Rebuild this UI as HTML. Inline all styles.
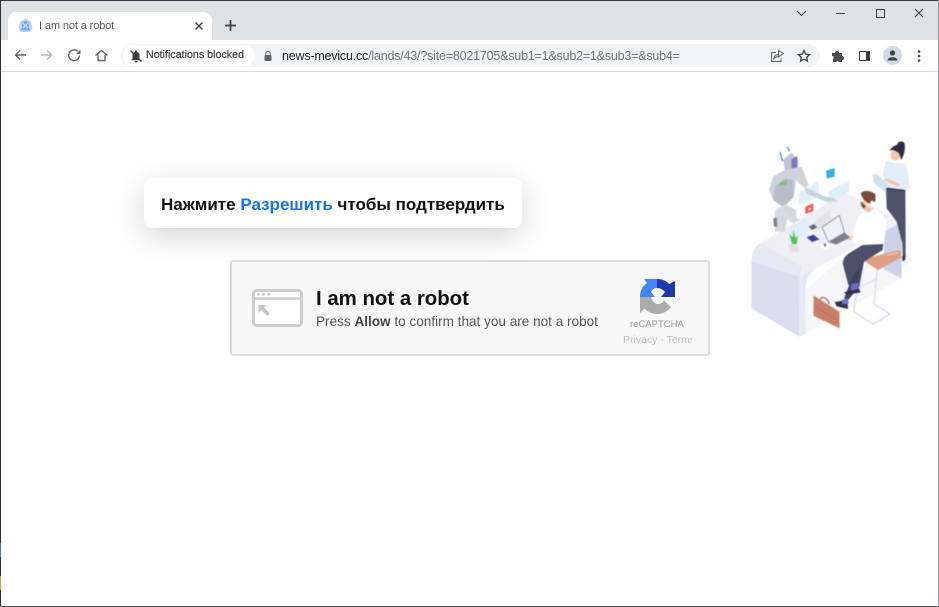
<!DOCTYPE html>
<html><head><meta charset="utf-8"><title>I am not a robot</title>
<style>
html,body{margin:0;padding:0;background:#fff}
body{width:939px;height:607px;position:relative;overflow:hidden;font-family:"Liberation Sans",sans-serif}
.a{position:absolute;white-space:nowrap}
svg{position:absolute;overflow:visible}
</style></head><body>
<div class="a" style="left:0;top:0;width:939px;height:40px;background:#dee1e6"></div>
<div class="a" style="left:0;top:40px;width:939px;height:31px;background:#fff"></div>
<div class="a" style="left:0;top:71px;width:939px;height:1px;background:#dadce0"></div>
<div class="a" style="left:8px;top:12px;width:204px;height:28px;background:#fff;border-radius:8px 8px 0 0"></div>
<svg style="left:17px;top:17px" width="17" height="17" viewBox="0 0 17 17"><path d="M8.500 1.500L14 4.500 15.500 11 13 15H4L1.500 11 3 4.500z" fill="#bcd6f8"/><path d="M3 13.500h11l-2-2.500V7.500a3.500 3.500 0 0 0-7 0V11z" fill="#76aaf0"/><path d="M6 6l5 5M11 6l-5 5" stroke="#dce9fb" stroke-width=".9"/></svg>
<div class="a" style="left:39px;top:19px;font-size:11px;line-height:14px;color:#55595e;letter-spacing:-.12px">I am not a robot</div>
<svg style="left:194px;top:22px" width="10" height="8" viewBox="0 0 10 8"><path d="M1.500 .5l7 7M8.500 .5l-7 7" stroke="#3c4043" stroke-width="1.400" fill="none"/></svg>
<svg style="left:224px;top:19px" width="13" height="13" viewBox="0 0 13 13"><path d="M6.500 1v11M1 6.500h11" stroke="#3c4043" stroke-width="1.700" fill="none"/></svg>
<svg style="left:796px;top:10px" width="11" height="7" viewBox="0 0 11 7"><path d="M1 1l4.500 4.500L10 1" stroke="#45494e" stroke-width="1.100" fill="none"/></svg>
<div class="a" style="left:836px;top:13px;width:9px;height:1px;background:#3c4043"></div>
<div class="a" style="left:876px;top:9px;width:7px;height:7px;border:1px solid #3c4043"></div>
<svg style="left:914px;top:8px" width="10" height="10" viewBox="0 0 10 10"><path d="M1 1l8 8M9 1L1 9" stroke="#3c4043" stroke-width="1" fill="none"/></svg>
<svg style="left:12px;top:47px" width="16" height="16" viewBox="0 0 16 16"><path d="M14 8H3.500M8 3.500L3.500 8 8 12.500" stroke="#5f6368" stroke-width="1.400" fill="none"/></svg>
<svg style="left:39px;top:47px" width="16" height="16" viewBox="0 0 16 16"><path d="M2 8h10.500M8 3.500L12.500 8 8 12.500" stroke="#b4b7bb" stroke-width="1.400" fill="none"/></svg>
<svg style="left:66px;top:47px" width="16" height="16" viewBox="0 0 16 16"><path d="M13.500 8.500A5.400 5.400 0 1 1 11.800 4.300" stroke="#5f6368" stroke-width="1.400" fill="none"/><path d="M14.500 2.500v4.500H10z" fill="#5f6368"/></svg>
<svg style="left:93px;top:47px" width="16" height="16" viewBox="0 0 16 16"><path d="M2.500 8.500L8.500 3.500l6 5M5 7.500V13.500h7V7.500" stroke="#5f6368" stroke-width="1.400" fill="none"/></svg>
<div class="a" style="left:121px;top:44px;width:699px;height:23px;border-radius:12px;background:#f1f3f4"></div>
<div class="a" style="left:122px;top:45px;width:133px;height:21px;border-radius:11px;background:#fff"></div>
<svg style="left:129px;top:49px" width="14" height="14" viewBox="0 0 14 14"><path d="M2 11.200h10l-1.500-1.700V6.300A3.500 3.500 0 0 0 8 3V1.500H6V3a3.500 3.500 0 0 0-2.500 3.300v3.200zM5.500 12h3a1.500 1.500 0 0 1-3 0z" fill="#3c4043"/><path d="M1.500 1.500l11 11" stroke="#3c4043" stroke-width="1.300"/></svg>
<div class="a" style="left:146px;top:49px;font-size:10.700px;line-height:13px;color:#3c4043;-webkit-text-stroke:.2px #3c4043">Notifications blocked</div>
<svg style="left:263px;top:50px" width="10" height="12" viewBox="0 0 10 12"><path d="M2.800 5V3.500a2.200 2.200 0 0 1 4.400 0V5" stroke="#5f6368" fill="none"/><rect x="1.500" y="5" width="7" height="6" rx="1" fill="#5f6368"/></svg>
<div class="a" style="left:282px;top:49px;font-size:12.500px;line-height:15px;letter-spacing:-.2px;color:#6f7377"><span style="color:#202124">news-mevicu.cc</span>/lands/43/?site=8021705&amp;sub1=1&amp;sub2=1&amp;sub3=&amp;sub4=</div>
<svg style="left:770px;top:49px" width="15" height="14" viewBox="0 0 15 14"><path d="M6 3.500H1.500v9H11V9.500M8.500 7.500V5.500C5.500 5.500 4 7.500 3.800 10 5 8.500 6.500 7.500 8.500 7.500zM8.500 1.500L13.500 4.500 8.500 8z" stroke="#5f6368" stroke-width="1" fill="none"/></svg>
<svg style="left:797px;top:49px" width="14" height="14" viewBox="0 0 14 14"><path d="M7 1.500l1.600 3.700 4 .4-3 2.600.9 4L7 10.100l-3.500 2.100.9-4-3-2.600 4-.4z" stroke="#3c4043" stroke-width="1.300" fill="none"/></svg>
<svg style="left:831px;top:49px" width="14" height="14" viewBox="0 0 14 14"><path d="M1 4h3a2 2 0 0 1 4 0h3v3a2 2 0 0 1 0 4v2H8a2 2 0 0 0-3 0H2V10a2 2 0 0 0 0-3H1z" fill="#4a4e52"/></svg>
<div class="a" style="left:859px;top:51px;width:6px;height:8px;border:1.500px solid #3c4043;border-right:4px solid #3c4043"></div>
<div class="a" style="left:883px;top:46px;width:19px;height:19px;border-radius:50%;background:#d3d8e2"></div>
<svg style="left:885px;top:48px" width="15" height="15" viewBox="0 0 15 15"><circle cx="7.500" cy="5" r="2.600" fill="#3c4043"/><path d="M2.500 12.500c0-2.300 3-3.300 5-3.300s5 1 5 3.300z" fill="#3c4043"/></svg>
<svg style="left:917px;top:50px" width="4" height="12" viewBox="0 0 4 12"><circle cx="2" cy="1.500" r="1.300" fill="#45494e"/><circle cx="2" cy="6" r="1.300" fill="#45494e"/><circle cx="2" cy="10.500" r="1.300" fill="#45494e"/></svg>
<div class="a" style="left:0;top:0;width:939px;height:1px;background:#3a3a3c"></div>
<div class="a" style="left:0;top:0;width:1px;height:607px;background:#2f3033"></div>
<div class="a" style="left:0;top:543px;width:1px;height:14px;background:#3c78d8"></div>
<div class="a" style="left:0;top:576px;width:1px;height:14px;background:#b5ac2e"></div>
<div class="a" style="left:938px;top:0;width:1px;height:607px;background:#9a9c9f"></div>
<div class="a" style="left:0;top:606px;width:939px;height:1px;background:#55575a"></div>

<div class="a" style="left:144px;top:178px;width:378px;height:50px;background:#fff;border-radius:8px;box-shadow:0 8px 28px rgba(0,0,0,.17)"></div>
<div class="a" style="left:161px;top:195px;font-size:17px;line-height:20px;font-weight:700;color:#111">Нажмите <span style="color:#1a73e8">Разрешить</span> чтобы подтвердить</div>

<div class="a" style="left:230px;top:260px;width:476px;height:92px;background:#f8f8f8;border:2px solid #dcdcdc;border-radius:3px"></div>
<svg style="left:252px;top:288px" width="51" height="39" viewBox="0 0 51 39"><rect x="1.500" y="2.500" width="48" height="35" rx="3" fill="#fff" stroke="#cdcdcd" stroke-width="3"/><path d="M1 10.500h49" stroke="#cdcdcd" stroke-width="2.400"/><circle cx="6.500" cy="6.300" r="1.400" fill="#c4c4c4"/><circle cx="11.500" cy="6.300" r="1.400" fill="#c4c4c4"/><circle cx="17" cy="6.300" r="1.400" fill="#c4c4c4"/><path d="M6.500 17h8L12 19.500 18 25.500 15.500 28 9.500 22 6.500 25z" fill="#c4c4c4"/></svg>
<div class="a" style="left:316px;top:286px;font-size:20.400px;line-height:26px;font-weight:700;color:#111">I am not a robot</div>
<div class="a" style="left:316px;top:313px;font-size:13.570px;line-height:17px;color:#555">Press <b style="color:#444">Allow</b> to confirm that you are not a robot</div>
<svg style="left:639px;top:277px" width="37" height="37" viewBox="0 0 37 37">
<path d="M1 20C1 13 4 9 8 6L5 2H18V11C15 11 13 12.500 12 15L16 20z" fill="#4285f4"/>
<path d="M18 2C23 2 27 3.500 30 7L36 4V20H22L26 15C24 12.500 21 11 18 11z" fill="#1c3aa9"/>
<path d="M1 20H12C13 24 16 27 19 27 21.500 27 24 25.500 25 23.500L32 30C29 34 24 37 18 37 13 37 9 35 5.500 31.500L1 36z" fill="#ababab"/>
</svg>
<div class="a" style="left:630px;top:319px;font-size:9.500px;line-height:12px;color:#a6a6a6;-webkit-text-stroke:.15px #a6a6a6">reCAPTCHA</div>
<div class="a" style="left:623px;top:334px;width:69px;overflow:hidden;font-size:10.500px;line-height:13px;color:#bcbcbc">Privacy - Terms</div>

<svg style="left:730px;top:130px;filter:blur(.45px)" width="200" height="215" viewBox="0 0 600 645">
<path d="M520 360l28 30-30 22z" fill="#f4f5f9"/>
<path d="M225 612V480L360 365 470 415 512 445z" fill="#f6f6f9"/>
<path d="M462 262L510 280Q515 285 515 295V445L462 418z" fill="#ccd2e6"/>
<path d="M65 395Q65 355 95 338L345 188 505 268Q515 275 500 285L370 355 250 418Q215 432 208 470V620L65 535z" fill="#efeff5"/>
<path d="M65 395Q65 355 92 340L215 410Q208 430 208 465V620L65 535z" fill="#d9ddee"/>
<path d="M65 395Q66 360 92 340L215 410Q210 420 208 440z" fill="#e6e9f4"/>
<path d="M208 470Q210 432 250 416V424Q228 436 226 480V610L210 620z" fill="#e6e8f3"/>
<path d="M395 398L371 545 430 583 479 552 432 522 442 415M388 472L438 448" stroke="#dde0f1" stroke-width="5" fill="none" stroke-linejoin="round"/>
<path d="M395 388L500 362 513 362 513 382 445 420z" fill="#dca084"/>
<path d="M470 376L505 368" stroke="#fff" stroke-width="3" opacity=".5"/>
<path d="M251 497L328 545 329 595 250 557z" fill="#c87f69"/>
<path d="M270 510c3-14 22-8 28 12" stroke="#b26d55" stroke-width="4" fill="none"/>
<path d="M255 530L325 572" stroke="#a96a54" stroke-width="1.500"/>
<path d="M468 92Q480 95 500 100L525 100 535 130 540 175 527 180 470 175 458 135z" fill="#e4edf9"/>
<path d="M468 175L526 182 527 340 517 340 500 275 470 235z" fill="#50536c"/>
<path d="M517 340h10v38l-9 4z" fill="#50536c"/>
<path d="M516 380l10-3v12l-8 5z" fill="#33364e"/>
<path d="M470 175L526 182" stroke="#2f3146" stroke-width="4"/>
<path d="M427 135L440 131 472 162 466 186 432 160z" fill="#cfe0ef"/>
<path d="M470 150L505 165" stroke="#f3c6ae" stroke-width="9" stroke-linecap="round"/>
<circle cx="496" cy="76" r="15" fill="#f3c6ae"/>
<path d="M478 62Q490 44 512 42L522 36 525 52Q524 72 514 90L506 68 490 60z" fill="#2f2b44"/>
<circle cx="513" cy="45" r="11" fill="#2f2b44"/>
<path d="M370 300Q385 252 405 242L440 236 470 268 462 345 400 352 368 335z" fill="#fff"/>
<path d="M398 345L460 342 458 360 402 395 388 470 372 478 355 465 338 400Q340 378 365 365z" fill="#4c4f68"/>
<path d="M395 410L375 485 355 510 342 505 372 430z" fill="#3f425a"/>
<path d="M341 488L385 472 392 487 352 494z" fill="#2f3146"/>
<path d="M314 516L352 510 354 537 320 529z" fill="#2f3146"/>
<path d="M364 462l22-4-3 20-20 3zM334 510l20-5 1 16-17 3z" fill="#6b6bd6"/>
<path d="M326 314L366 318 362 332 340 325z" fill="#f3c6ae"/>
<path d="M403 208c3 18 14 22 28 26l-16 15-12-9-6-22z" fill="#f3c6ae"/>
<path d="M392 190Q408 174 436 192V216L424 212 419 222Q400 215 392 190z" fill="#7b4b3a"/>
<path d="M393 214c-2 10 2 18 10 22l4-8z" fill="#7b4b3a"/>
<path d="M276 292L328 256 344 308 296 336z" fill="#edf0f6" stroke="#70748a" stroke-width="2"/>
<path d="M296 336L344 308 360 322 318 344z" fill="#7a7e92"/>
<path d="M236 290L298 240 304 268 262 300z" fill="#e2e4ec"/>
<path d="M236 290L252 282 262 292 246 300z" fill="#666a7c"/>
<path d="M230 322L250 314 268 328 246 336z" fill="#36439a"/>
<path d="M270 347L294 338 300 350 282 358z" fill="#fff"/>
<circle cx="285" cy="345" r="4" fill="#8c5a48"/>
<path d="M207 190L266 152 268 198 208 228zM296 185L356 150 358 185 300 215zM172 298L232 262 234 308 176 340z" fill="#dcecf8" opacity=".85"/>
<path d="M288 122L314 114 314 140 290 146z" fill="#34aee8"/>
<path d="M226 230L250 220 250 243 226 252z" fill="#ef5e4f"/>
<path d="M236 232l8 4-8 6z" fill="#fff"/>
<path d="M173 345L205 332 204 364 180 368z" fill="#dfe1ea"/>
<path d="M186 342L178 312 189 322 190 298 197 325 204 316 200 342z" fill="#59c158"/>
<path d="M150 66L158 94M172 50L178 64" stroke="#3a8ee0" stroke-width="4"/>
<path d="M160 88L185 68 205 90 205 125 182 135 165 125z" fill="#c0c3d1"/>
<path d="M184 88L202 78 201 122 185 132z" fill="#7b7bc0"/>
<path d="M130 138L170 118 215 110 236 165 224 175 198 150 192 200 162 232 130 212 117 180z" fill="#cfd2dd"/>
<path d="M135 170L165 145 190 150 190 200 160 230 130 210z" fill="#b8bbca"/>
<path d="M150 158L172 150 170 162 152 168z" fill="#7fc06a"/>
<path d="M135 245L165 222 198 240 200 268 172 265 165 305 135 305z" fill="#d6d8e1"/>
<path d="M130 265L140 262 142 290 132 290z" fill="#7b7e8c"/>
<path d="M225 172L285 200 315 205 322 215 290 216 230 190z" fill="#c8d1e0"/>
<path d="M140 232L185 258 210 268 190 280 140 250z" fill="#d8dbe4"/>
</svg>
</body></html>
